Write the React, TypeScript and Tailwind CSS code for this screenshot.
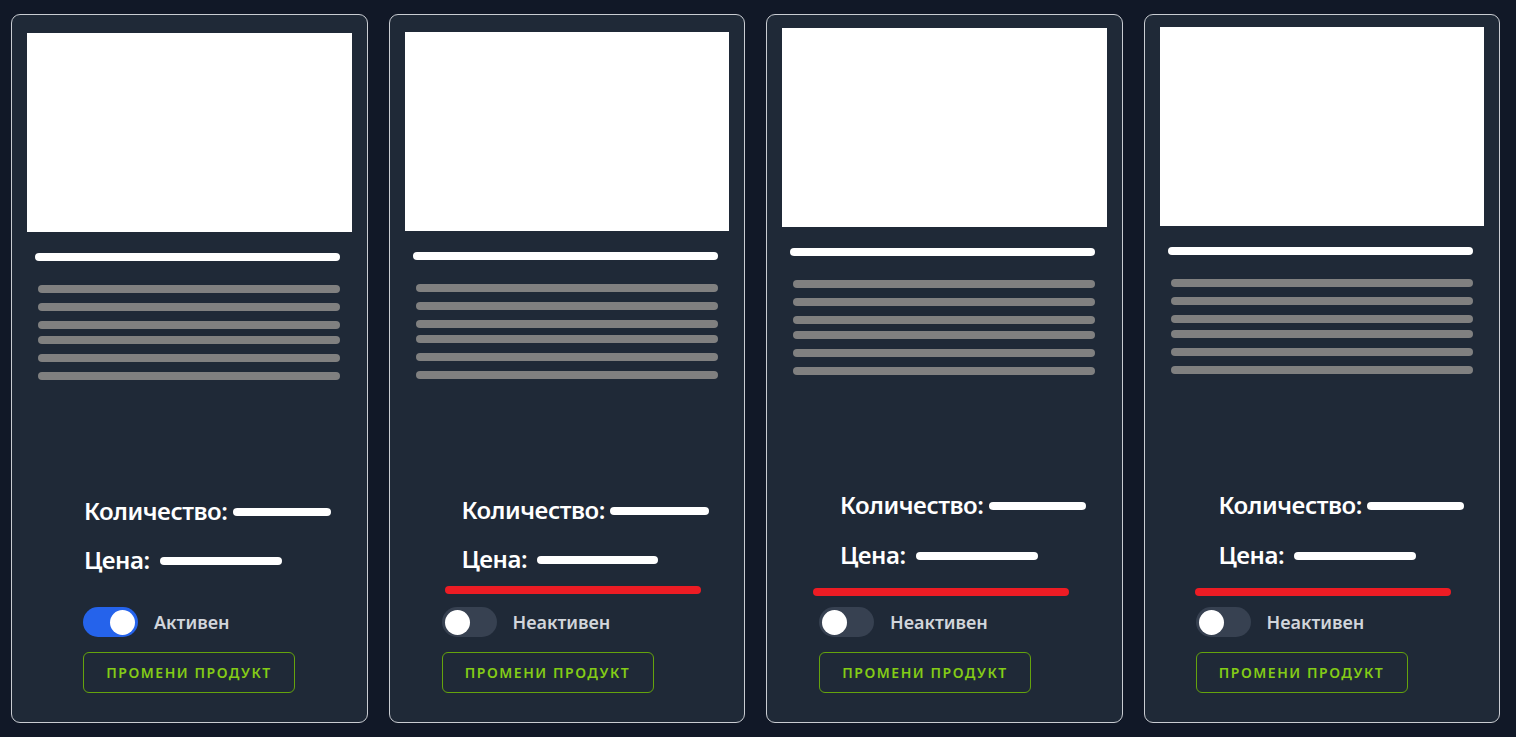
import React from "react";

type Card = {
  imgPt: string;
  textMl: string;
  toggleMl: string;
  redMl: string | null;
  priceMt: string;
  redMt: string;
  toggleMt: string;
  qtyBar: string;
  priceBar: string;
  active: boolean;
};

const cards: Card[] = [
  {
    imgPt: "pt-[18px]",
    textMl: "ml-[72px]",
    toggleMl: "ml-[71px]",
    redMl: null,
    priceMt: "mt-[17px]",
    redMt: "",
    toggleMt: "mt-[31px]",
    qtyBar: "w-[98px] ml-[5px]",
    priceBar: "w-[122px] ml-[10px]",
    active: true,
  },
  {
    imgPt: "pt-[17px]",
    textMl: "ml-[72px]",
    toggleMl: "ml-[52px]",
    redMl: "ml-[55px]",
    priceMt: "mt-[17px]",
    redMt: "mt-[11px]",
    toggleMt: "mt-[13px]",
    qtyBar: "w-[99px] ml-[5px]",
    priceBar: "w-[121px] ml-[10px]",
    active: false,
  },
  {
    imgPt: "pt-[13px]",
    textMl: "ml-[73px]",
    toggleMl: "ml-[52px]",
    redMl: "ml-[46px]",
    priceMt: "mt-[18px]",
    redMt: "mt-[17px]",
    toggleMt: "mt-[11px]",
    qtyBar: "w-[97px] ml-[5px]",
    priceBar: "w-[122px] ml-[10px]",
    active: false,
  },
  {
    imgPt: "pt-[12px]",
    textMl: "ml-[74px]",
    toggleMl: "ml-[51px]",
    redMl: "ml-[50px]",
    priceMt: "mt-[18px]",
    redMt: "mt-[17px]",
    toggleMt: "mt-[11px]",
    qtyBar: "w-[97px] ml-[5px]",
    priceBar: "w-[122px] ml-[10px]",
    active: false,
  },
];

function Toggle({ on }: { on: boolean }) {
  return (
    <div
      className={
        on
          ? "relative w-[55px] h-[30px] rounded-full bg-[#2563eb] shrink-0"
          : "relative w-[55px] h-[30px] rounded-full bg-[#374151] shrink-0"
      }
    >
      <div
        className={
          on
            ? "absolute top-[3px] left-[27px] w-[25px] h-[25px] rounded-full bg-white"
            : "absolute top-[3px] left-[3px] w-[25px] h-[25px] rounded-full bg-white"
        }
      />
    </div>
  );
}

function ProductCard({ c }: { c: Card }) {
  const lineMt = ["", "mt-[10px]", "mt-[10px]", "mt-[7px]", "mt-[10px]", "mt-[10px]"];
  return (
    <div className="flex flex-col h-full rounded-[9px] border border-[#c9ccd2] bg-[#1f2937] overflow-hidden">
      <div className={`px-[15px] ${c.imgPt}`}>
        <div className="w-full h-[199px] bg-white" />
        <div className="mt-[21px] ml-[8px] w-[305px] h-[8px] rounded-full bg-white" />
        <div className="mt-[24px] ml-[11px] w-[302px]">
          {lineMt.map((m, i) => (
            <div key={i} className={`${m} h-[8px] rounded-full bg-[#808080]`} />
          ))}
        </div>
      </div>
      <div className="mt-auto pb-[29px] flex flex-col">
        <div className={`${c.textMl} flex items-center h-[32px]`}>
          <span className="text-[24px] leading-[32px] font-semibold text-white tracking-[-0.45px]">Количество:</span>
          <div className={`${c.qtyBar} h-[8px] rounded-full bg-white mt-[1px]`} />
        </div>
        <div className={`${c.textMl} ${c.priceMt} flex items-center h-[32px]`}>
          <span className="text-[24px] leading-[32px] font-semibold text-white tracking-[-0.45px]">Цена:</span>
          <div className={`${c.priceBar} h-[8px] rounded-full bg-white mt-[1px]`} />
        </div>
        {c.redMl && (
          <div className={`${c.redMl} ${c.redMt} w-[256px] h-[8px] rounded-full bg-[#ed1c24]`} />
        )}
        <div className={`${c.toggleMl} ${c.toggleMt} flex items-center gap-[16px]`}>
          <Toggle on={c.active} />
          <span className="text-[18px] leading-[28px] font-semibold text-[#d1d5db]">
            {c.active ? "Активен" : "Неактивен"}
          </span>
        </div>
        <div className={`${c.toggleMl} mt-[15px]`}>
          <button className="w-[212px] h-[41px] rounded-[6px] border border-[#65a30d] text-[#84cc16] text-[14px] font-semibold tracking-[0.11em] uppercase">
            Промени продукт
          </button>
        </div>
      </div>
    </div>
  );
}

export default function App() {
  return (
    <div
      className="w-full h-screen bg-[#111827] pt-[14px] pb-[14px] pl-[11px] pr-[16px]"
      style={{ fontFamily: '"Noto Sans", "Open Sans", sans-serif' }}
    >
      <div className="grid grid-cols-4 gap-[21px] h-full">
        {cards.map((c, i) => (
          <ProductCard key={i} c={c} />
        ))}
      </div>
    </div>
  );
}
